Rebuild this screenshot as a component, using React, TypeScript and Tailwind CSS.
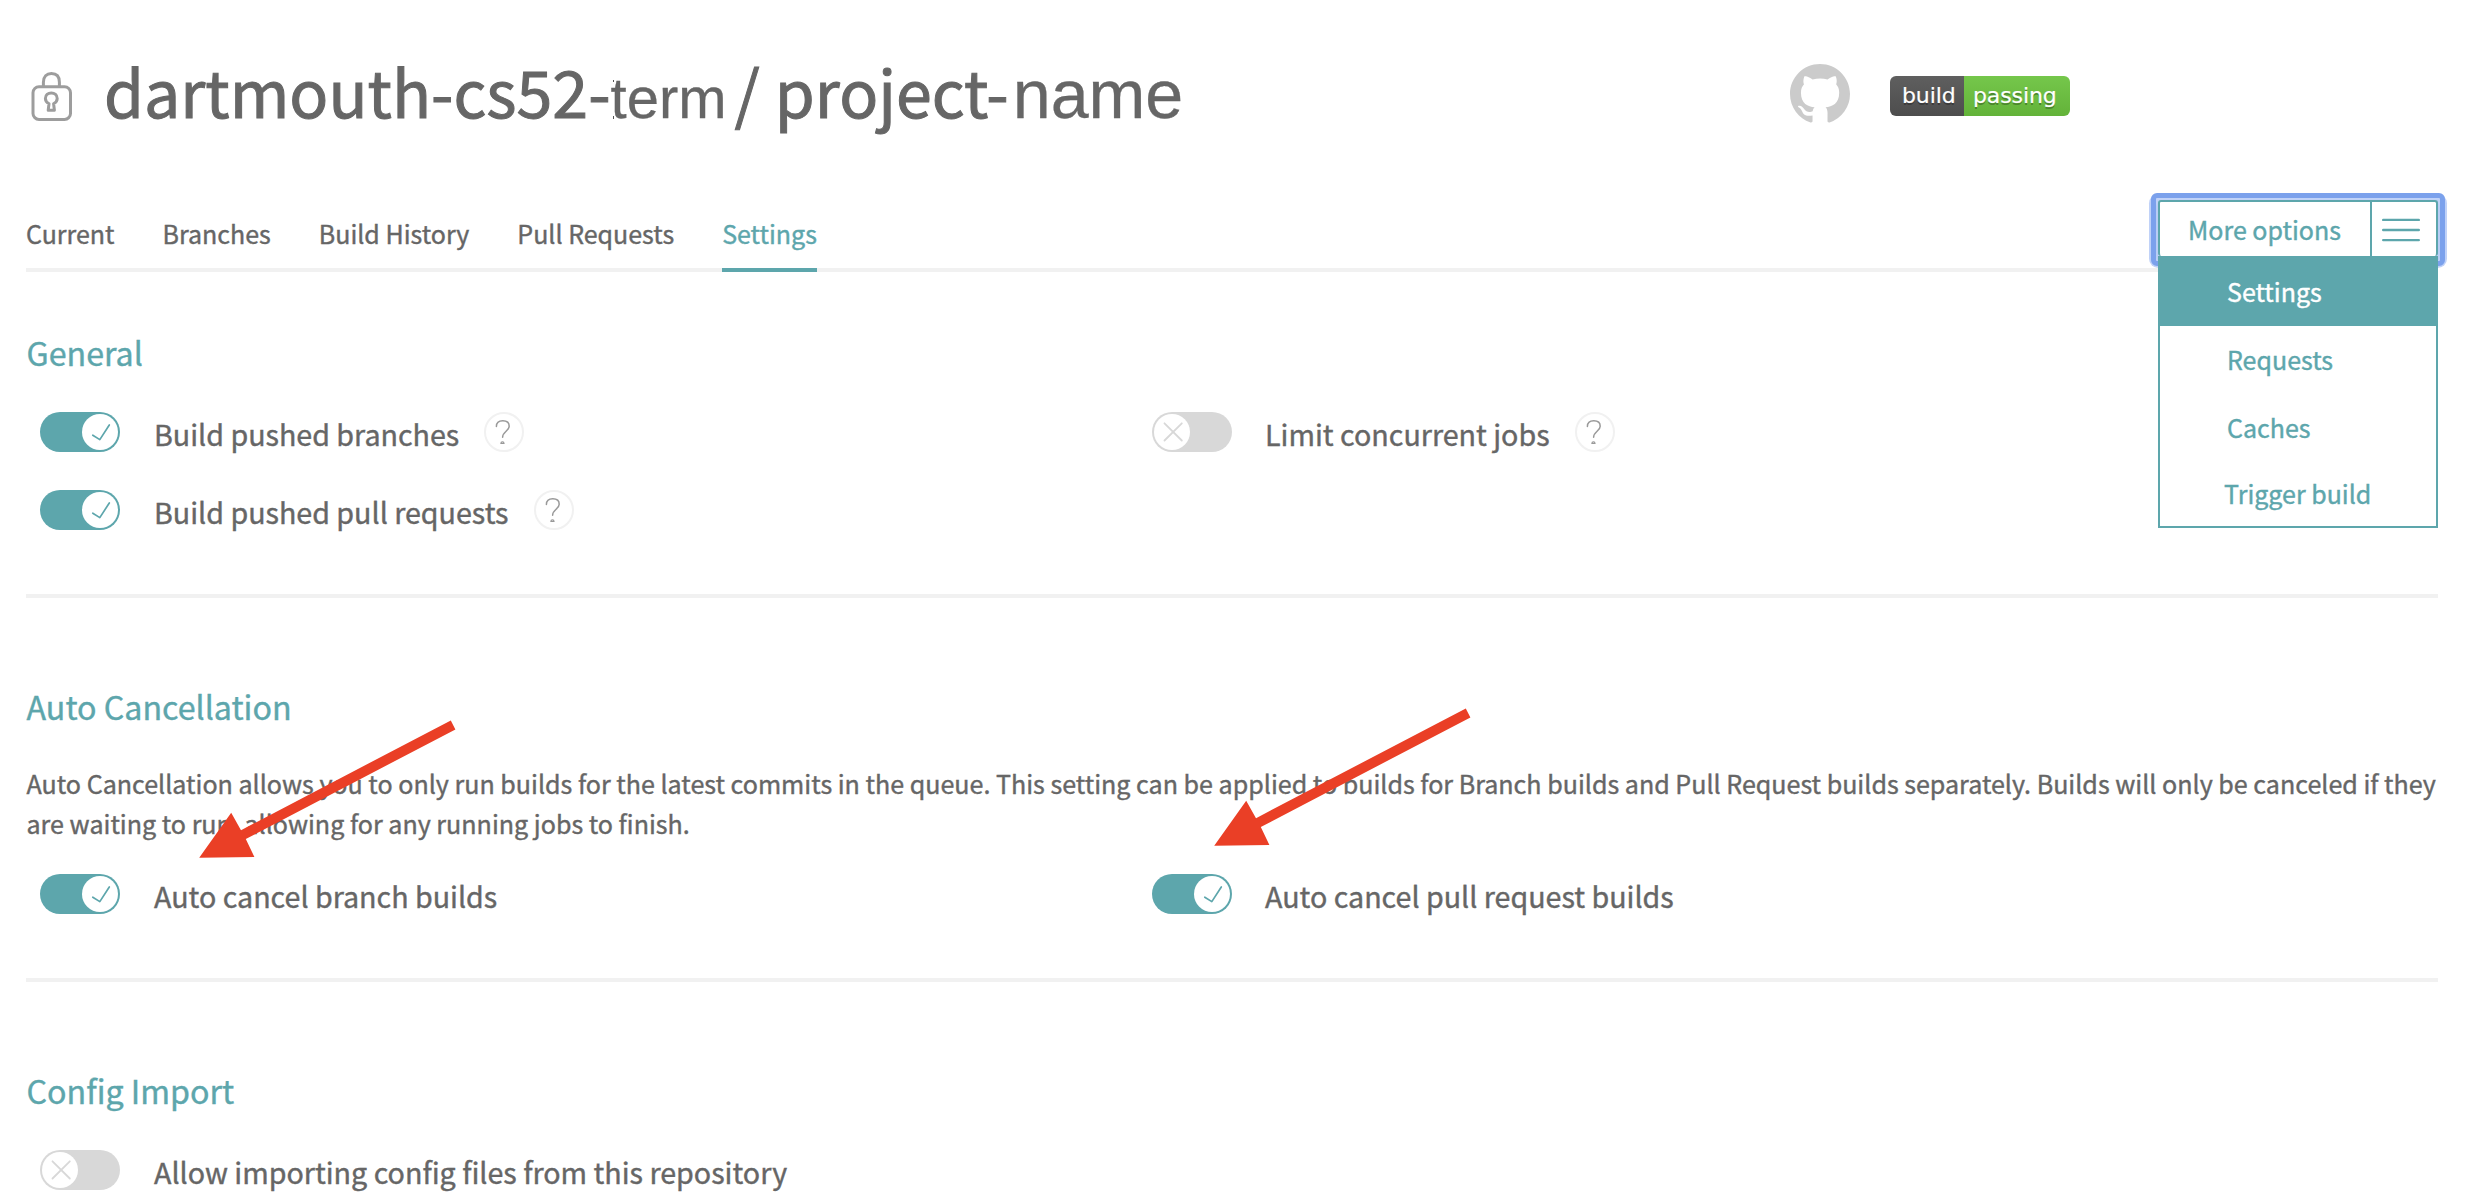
const SANS = "font-['Noto_Sans_CJK_SC','Noto_Sans',sans-serif]";

function Toggle({ on }: { on?: boolean }) {
  return on ? (
    <div className="flex h-10 w-20 shrink-0 items-center justify-end rounded-full bg-[#5da6ac] p-0.5">
      <div className="h-9 w-9 rounded-full bg-white">
        <svg viewBox="0 0 36 36" className="h-9 w-9" fill="none" stroke="#5da6ac" strokeWidth="1.7">
          <path d="M10.8 21.2 L17.8 25.6 L27.3 11" strokeLinecap="round" strokeLinejoin="round" />
        </svg>
      </div>
    </div>
  ) : (
    <div className="flex h-10 w-20 shrink-0 items-center rounded-full bg-[#d8d8d8] p-0.5">
      <div className="h-9 w-9 rounded-full bg-white">
        <svg viewBox="0 0 36 36" className="h-9 w-9" fill="none" stroke="#d8d8d8" strokeWidth="1.8">
          <path d="M10.5 9.3 L27.8 26.5 M27.8 9.3 L10.5 26.5" strokeLinecap="round" />
        </svg>
      </div>
    </div>
  );
}

function Help() {
  return (
    <svg viewBox="0 0 40 40" className="h-10 w-10 shrink-0" fill="none">
      <circle cx="20" cy="20" r="19" stroke="#f1f1f1" strokeWidth="2" />
      <path
        d="M12.4 14.6 C12.4 10.8 14.8 8.8 18.8 8.8 C22.9 8.8 25.2 11 25.2 14.2 C25.2 19 18.6 19.6 18.6 25.2"
        stroke="#999"
        strokeWidth="1.5"
        strokeLinecap="round"
      />
      <path d="M16.9 31.4 C16.9 29.2 20 29.2 20 31.4 Z" stroke="#999" strokeWidth="1.2" />
    </svg>
  );
}

function Setting({ on, label, help, second }: { on?: boolean; label: string; help?: boolean; second?: boolean }) {
  return (
    <div className="flex h-10 items-center">
      <Toggle on={on} />
      <span className={`${second ? "ml-[33px]" : "ml-[34px]"} pt-[3px] text-[28.65px] leading-10 whitespace-nowrap`}>{label}</span>
      {help && (
        <div className="ml-[25px]">
          <Help />
        </div>
      )}
    </div>
  );
}

function Heading({ children }: { children: string }) {
  return <h2 className="pl-[0.5px] text-[32.2px] leading-10 text-[#5da6ac]">{children}</h2>;
}

function Lock() {
  return (
    <svg viewBox="0 0 42 50" className="mt-[11px] ml-[5px] h-[50px] w-[42px] shrink-0" fill="none" stroke="#9d9d9d" strokeWidth="3">
      <rect x="2" y="15.8" width="37.5" height="32.6" rx="6" />
      <path d="M12.4 15.5 V11.2 C12.4 5.4 15.6 2.5 20.4 2.5 C25.2 2.5 28.4 5.4 28.4 11.2 V15.5" />
      <path d="M17.2 39.3 L18 32.8 C15.6 31.4 14.4 29.6 14.4 27.4 C14.4 24.1 17 22 20.3 22 C23.6 22 26.2 24.1 26.2 27.4 C26.2 29.6 25 31.4 22.6 32.8 L23.4 39.3 Z" strokeLinejoin="round" />
    </svg>
  );
}

function GithubMark() {
  return (
    <svg viewBox="0 0 16 16" className="mt-1 ml-auto h-[60px] w-[60px] shrink-0" fill="#cbcbcb">
      <path d="M8 0C3.58 0 0 3.58 0 8c0 3.54 2.29 6.53 5.47 7.59.4.07.55-.17.55-.38 0-.19-.01-.82-.01-1.49-2.01.37-2.53-.49-2.69-.94-.09-.23-.48-.94-.82-1.13-.28-.15-.68-.52-.01-.53.63-.01 1.08.58 1.23.82.72 1.21 1.87.87 2.33.66.07-.52.28-.87.51-1.07-1.78-.2-3.64-.89-3.64-3.95 0-.87.31-1.59.82-2.15-.08-.2-.36-1.02.08-2.12 0 0 .67-.21 2.2.82.64-.18 1.32-.27 2-.27s1.36.09 2 .27c1.53-1.04 2.2-.82 2.2-.82.44 1.1.16 1.92.08 2.12.51.56.82 1.27.82 2.15 0 3.07-1.87 3.75-3.65 3.95.29.25.54.73.54 1.48 0 1.07-.01 1.93-.01 2.2 0 .21.15.46.55.38A8.01 8.01 0 0 0 16 8c0-4.42-3.58-8-8-8z" />
    </svg>
  );
}

function BuildBadge() {
  return (
    <div className="mt-4 mr-[368px] ml-10 flex h-10 w-[180px] shrink-0 overflow-hidden rounded-md font-['DejaVu_Sans',sans-serif] text-[22px] leading-10 tracking-[-0.1px] text-white [text-shadow:0_2px_0_rgba(1,1,1,0.3)] [-webkit-text-stroke:0.2px]">
      <span className="w-[74px] bg-linear-to-b from-[#5f5f5f] to-[#4d4d4d] pl-3">build</span>
      <span className="flex-1 bg-linear-to-b from-[#75c74b] to-[#63b339] pl-[9px]">passing</span>
    </div>
  );
}

function OptionsMenu() {
  return (
    <div className="absolute top-[-13px] right-0 w-[280px] text-[#5da6ac]">
      <div className="flex h-14 rounded-[3px] border-2 border-b-0 border-[#5da6ac] bg-white leading-[54px] shadow-[0_4px_0_2px_#b9cdf6,0_3px_0_9px_#c0d2f8]">
        <div className="w-[212px] border-r-2 border-[#5da6ac] pl-[28px]">More options</div>
        <svg viewBox="0 0 38 24" className="mt-[16px] ml-[10px] h-6 w-[38px]" stroke="#5da6ac" strokeWidth="2.4" strokeLinecap="round">
          <path d="M1.2 1.9 H36.8 M1.2 12 H36.8 M1.2 22.1 H36.8" />
        </svg>
      </div>
      <div className="pointer-events-none absolute -top-[7px] -left-[7px] h-[73px] w-[294px] rounded-[6px] border-[5px] border-[#7ba1ec]" />
      <ul className="relative h-[272px] border-2 border-t-0 border-[#5da6ac] bg-white">
        <li className="h-[70px] bg-[#5da6ac] pt-[15px] pl-[67px] text-white">Settings</li>
        <li className="h-[68px] pt-[13px] pl-[67px]">Requests</li>
        <li className="h-[68px] pt-[13px] pl-[67px]">Caches</li>
        <li className="pt-[11px] pl-[64px]">Trigger build</li>
      </ul>
    </div>
  );
}

function Arrow({ className }: { className: string }) {
  return (
    <svg viewBox="0 0 260 140" className={`pointer-events-none absolute h-[140px] w-[260px] ${className}`} fill="#ea3f26">
      <path d="M0.2 137.8 L32.2 92.8 L42 110.2 L251.8 0.4 L256.4 9.4 L46.8 119 L55.4 137 Z" />
    </svg>
  );
}

const TABS = ["Current", "Branches", "Build History", "Pull Requests"];

export default function App() {
  return (
    <main className={`${SANS} relative h-[1198px] overflow-hidden bg-white px-[26px] pr-7 pt-[60px] text-[#666] [-webkit-text-stroke:0.4px]`}>
      <header className="flex h-[60px] items-start">
        <Lock />
        <h1 className="ml-[31px] flex items-baseline text-[64.5px] leading-[60px] whitespace-nowrap [-webkit-text-stroke:1px]">
          <span>dartmouth-cs52-</span>
          <span className="relative font-['Liberation_Sans',sans-serif] text-[58px] [-webkit-text-stroke:0.3px]">
            term
            <i className="absolute top-[12px] left-[2px] h-0.5 w-px bg-[#555]" />
            <i className="absolute top-[48px] left-[2px] h-[3px] w-px bg-[#555]" />
          </span>
          <span className="ml-[8px]">/</span>
          <span className="ml-[15px]">project-</span>
          <span className="ml-[4px] font-['Liberation_Sans',sans-serif] text-[68.2px] [-webkit-text-stroke:0.3px]">name</span>
        </h1>
        <GithubMark />
        <BuildBadge />
      </header>

      <nav className="relative mt-[93px] flex h-[59px] gap-12 border-b-4 border-[#f1f1f1] text-[25px] leading-10">
        {TABS.map((tab) => (
          <span key={tab}>{tab}</span>
        ))}
        <span className="-mb-1 border-b-4 border-[#5da6ac] text-[#5da6ac]">Settings</span>
        <OptionsMenu />
      </nav>

      <section className="mt-[60px] border-b-4 border-[#f1f1f1] pb-16">
        <Heading>General</Heading>
        <div className="mt-10 grid grid-cols-[1112px_1fr] gap-y-[38px] pl-3.5">
          <Setting on label="Build pushed branches" help />
          <Setting label="Limit concurrent jobs" help second />
          <Setting on label="Build pushed pull requests" help />
        </div>
      </section>

      <section className="mt-[88px] border-b-4 border-[#f1f1f1] pb-16">
        <Heading>Auto Cancellation</Heading>
        <p className="mt-[37px] pl-[0.5px] text-[25.07px] leading-10 whitespace-nowrap">
          Auto Cancellation allows you to only run builds for the latest commits in the queue. This setting can be applied to
          builds for Branch builds and Pull Request builds separately. Builds will only be canceled if they
          <br />
          are waiting to run, allowing for any running jobs to finish.
        </p>
        <div className="mt-[31px] grid grid-cols-[1112px_1fr] pl-3.5">
          <Setting on label="Auto cancel branch builds" />
          <Setting on label="Auto cancel pull request builds" second />
        </div>
      </section>

      <section className="mt-[88px]">
        <Heading>Config Import</Heading>
        <div className="mt-10 pl-3.5">
          <Setting label="Allow importing config files from this repository" />
        </div>
      </section>

      <Arrow className="top-[720px] left-[199px]" />
      <Arrow className="top-[708px] left-[1214px]" />
    </main>
  );
}
